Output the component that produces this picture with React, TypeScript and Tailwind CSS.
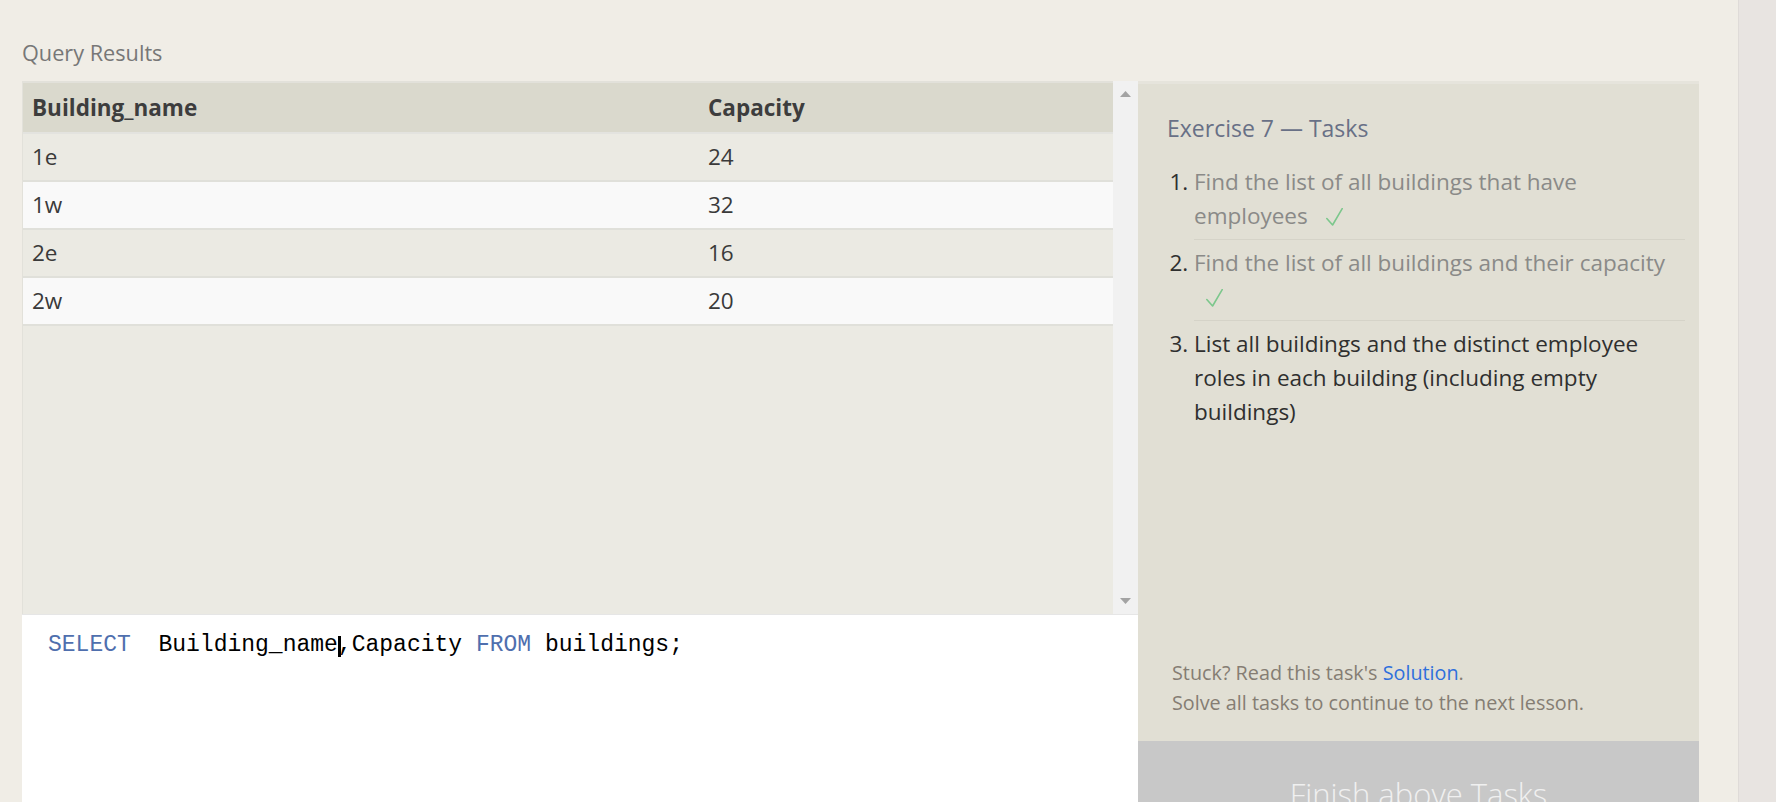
const rows = [
  ['1e', '24'],
  ['1w', '32'],
  ['2e', '16'],
  ['2w', '20'],
]

function Check() {
  return (
    <span className="ml-[12px] inline-block align-[-2px]">
      <svg width="17" height="18" viewBox="0 0 17 18" fill="none">
        <path d="M0.8 10.5 L6.6 17 L16.2 0.6" stroke="#7cc78c" strokeWidth="1.6" strokeLinecap="round" strokeLinejoin="round" />
      </svg>
    </span>
  )
}

export default function App() {
  return (
    <div className="flex h-[802px] w-[1776px] overflow-hidden bg-[#f0ede6] font-['Open_Sans',sans-serif]">
      <div className="flex-1 pl-[22px] pt-[38px]">
        <h2 className="text-[21.7px] leading-[30px] text-[#777]">Query Results</h2>

        <div className="mt-[13px] flex h-[800px]">
          {/* results + editor */}
          <div className="flex w-[1116px] flex-col">
            <div className="flex h-[533px]">
              <div className="flex-1 border-t-2 border-l border-[#e2e1da] bg-[#ebeae3] text-[22.5px] text-[#3a3a3a]">
                <div className="grid h-[51px] grid-cols-[676px_1fr] items-center border-b-2 border-[#e3e3df] bg-[#dad9cd] font-bold text-[#3d3d3d]">
                  <div className="pl-[9px]">Building_name</div>
                  <div className="pl-[9px]">Capacity</div>
                </div>
                {rows.map((r, i) => (
                  <div
                    key={r[0]}
                    className={`grid h-[48px] grid-cols-[676px_1fr] items-center border-b-2 border-[#e0e0da] ${
                      i % 2 === 0 ? 'bg-[#ebeae3]' : 'bg-[#f9f9f9]'
                    }`}
                  >
                    <div className="pl-[9px]">{r[0]}</div>
                    <div className="pl-[9px]">{r[1]}</div>
                  </div>
                ))}
              </div>
              <div className="flex w-[25px] flex-col items-center justify-between bg-[#f1f1f1] pt-[10px] pb-[10px]">
                <svg width="11" height="6" viewBox="0 0 11 6">
                  <polygon points="5.5,0 11,6 0,6" fill="#a3a3a3" />
                </svg>
                <svg width="11" height="6" viewBox="0 0 11 6">
                  <polygon points="0,0 11,0 5.5,6" fill="#a3a3a3" />
                </svg>
              </div>
            </div>

            <div className="flex-1 border-t border-[#e6e6e6] bg-white pl-[26px] pt-[14px] font-['Liberation_Mono',monospace] text-[23px] leading-[32px] whitespace-pre text-black">
              <span className="text-[#4f6fae]">SELECT</span>
              {'  Building_name'}
              <span className="relative">
                ,
                <span className="absolute left-[0px] top-[4px] h-[21px] w-[3px] bg-black" />
              </span>
              {'Capacity '}
              <span className="text-[#4f6fae]">FROM</span>
              {' buildings;'}
            </div>
          </div>

          {/* tasks */}
          <div className="flex w-[561px] flex-col border-t-[3px] border-[#e6e4dc] bg-[#e1dfd4]">
            <div className="pl-[29px] pr-[14px] pt-[27px]">
              <h3 className="text-[23px] text-[#687086]">Exercise 7 — Tasks</h3>
              <ol className="mt-[13px] list-decimal pl-[27px] text-[22.5px] leading-[34px] text-[#2f2f2f]">
                <li className="border-b border-[#d5d3c8] py-[6px]">
                  <span className="text-[#8a8a88]">Find the list of all buildings that have employees</span> <Check />
                </li>
                <li className="border-b border-[#d5d3c8] py-[6px]">
                  <span className="text-[#8a8a88]">Find the list of all buildings and their capacity</span> <Check />
                </li>
                <li className="py-[6px]">
                  List all buildings and the distinct employee roles in each building (including empty buildings)
                </li>
              </ol>
            </div>

            <div className="flex-1" />

            <div className="pl-[34px] pb-[23px] text-[19.8px] leading-[30px] text-[#857d73]">
              <p>
                Stuck? Read this task's <span className="text-[#2f6fdc]">Solution</span>.
              </p>
              <p>Solve all tasks to continue to the next lesson.</p>
            </div>

            <div className="h-[140px] bg-[#c8c8c8] pt-[30px] text-center text-[31px] font-light text-[#f0f0f0]">
              Finish above Tasks
            </div>
          </div>
        </div>
      </div>

      <div className="w-[38px] border-l border-[#dfdbd8] bg-[#e8e4e1]" />
    </div>
  )
}
